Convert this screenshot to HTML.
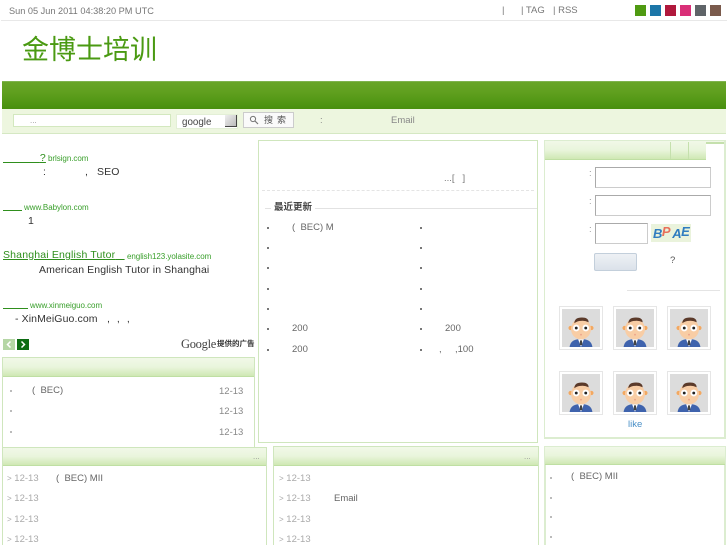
<!DOCTYPE html>
<html><head><meta charset="utf-8">
<style>
html,body{margin:0;padding:0;background:#fff}
#p{position:relative;width:727px;height:545px;overflow:hidden;font-family:"Liberation Sans","Noto Sans CJK SC",sans-serif;font-size:9.5px;color:#666}
#p div,#p span.a,#p svg{position:absolute}
.t{white-space:nowrap;line-height:12px;letter-spacing:0}
.box{border:1px solid #cfe6bd;box-sizing:border-box;background:#fff}
.hd{background:linear-gradient(#f1f8e8,#e9f5dc 50%,#cfe8b4);border-bottom:1px solid #bfdfa3;box-sizing:border-box}
.lnk{color:#2f8f1d;text-decoration:underline;font-size:10.5px;letter-spacing:.17px}
.u{color:#3aa02c;font-size:8px;letter-spacing:-.05px}
.d{color:#333;font-size:10.5px;letter-spacing:.1px}
.dot{width:2px;height:2px;background:#777}
.dl{width:2px;height:2px;background:#bbb}
.g{color:#aaa}
.inp{background:#fff;border:1px solid #aaa;border-right-color:#ccc;border-bottom-color:#ccc;box-sizing:border-box}
.av{width:44px;height:44px;border:1px solid #e6e6e6;box-sizing:border-box;background:#fff}
</style></head><body><div id="p">

<div class="t" style="left:9px;top:5px;color:#777;font-size:9.2px">Sun 05 Jun 2011 04:38:20 PM UTC</div>
<div class="t" style="left:502px;top:5px;color:#777">|</div>
<div class="t" style="left:521px;top:5px;color:#777">| TAG</div>
<div class="t" style="left:553px;top:5px;color:#777">| RSS</div>
<div style="left:635px;top:5px;width:11px;height:11px;background:#4f9a12"></div>
<div style="left:650px;top:5px;width:11px;height:11px;background:#1c76a8"></div>
<div style="left:665px;top:5px;width:11px;height:11px;background:#b0183c"></div>
<div style="left:680px;top:5px;width:11px;height:11px;background:#d92f78"></div>
<div style="left:695px;top:5px;width:11px;height:11px;background:#5f6468"></div>
<div style="left:710px;top:5px;width:11px;height:11px;background:#7a5a4c"></div>
<div style="left:1px;top:20px;width:726px;height:1px;background:#e8e8e8"></div>

<div style="left:22px;top:31px;font-size:27px;line-height:34px;color:#4a9a12;white-space:nowrap;font-family:'Noto Sans CJK SC',sans-serif;font-weight:400">金博士培训</div>

<div style="left:2px;top:81px;width:724px;height:28px;background:linear-gradient(#68a528,#5f9f1e 40%,#47900e);border-top:1px solid #7fb34e;box-sizing:border-box"></div>
<div style="left:2px;top:109px;width:724px;height:25px;background:#edf6df;border-bottom:1px solid #d5e8c3;box-sizing:border-box"></div>
<div style="left:13px;top:114px;width:158px;height:13px;background:#fff;border:1px solid #d3e8bf;box-sizing:border-box"></div>
<div class="t" style="left:30px;top:115px;color:#999;font-size:8px">...</div>
<div style="left:176px;top:114px;width:62px;height:15px;background:#fff;border:1px solid #e3efd6;box-sizing:border-box"></div>
<div class="t" style="left:182px;top:117px;color:#444;font-size:9.800px">google</div>
<div style="left:225px;top:115px;width:12px;height:12px;background:linear-gradient(135deg,#eee,#bbb);border-right:1px solid #444;border-bottom:1px solid #444;box-sizing:border-box"></div>
<div style="left:243px;top:112px;width:51px;height:16px;background:#fafafa;border:1px solid #ccc;box-sizing:border-box"></div>
<svg style="left:249px;top:115px" width="10" height="10" viewBox="0 0 10 10"><circle cx="4" cy="4" r="2.6" fill="none" stroke="#777"/><path d="M6 6l3 3" stroke="#777" stroke-width="1.2"/></svg>
<div class="t" style="left:264px;top:114px;color:#555;font-size:9px;letter-spacing:4px">搜索</div>
<div class="t" style="left:320px;top:115px;color:#888">:</div>
<div class="t" style="left:391px;top:115px;color:#888">Email</div>

<!-- ads -->
<div class="t lnk" style="left:3px;top:152px"><span style="letter-spacing:34px">&nbsp;</span>?</div>
<div class="t u" style="left:48px;top:153px">brlsign.com</div>
<div class="t d" style="left:43px;top:166px">:</div>
<div class="t d" style="left:85px;top:166px">,</div>
<div class="t d" style="left:97px;top:166px">SEO</div>

<div style="left:3px;top:210px;width:19px;height:1px;background:#2f8f1d"></div>
<div class="t u" style="left:24px;top:202px">www.Babylon.com</div>
<div class="t d" style="left:28px;top:215px">1</div>

<div class="t lnk" style="left:3px;top:249px">Shanghai English Tutor<span>&nbsp;&nbsp;&nbsp;</span></div>
<div class="t u" style="left:127px;top:251px">english123.yolasite.com</div>
<div class="t d" style="left:39px;top:264px">American English Tutor in Shanghai</div>

<div style="left:3px;top:308px;width:25px;height:1px;background:#2f8f1d"></div>
<div class="t u" style="left:30px;top:300px">www.xinmeiguo.com</div>
<div class="t d" style="left:15px;top:313px">- XinMeiGuo.com</div>
<div class="t d" style="left:107px;top:313px;letter-spacing:7px">,,,</div>

<div style="left:3px;top:339px;width:12px;height:11px;background:#b5d6a5"></div>
<svg style="left:3px;top:339px" width="12" height="11"><path d="M7.5 2.5L4.5 5.500L7.500 8.500" fill="none" stroke="#fff" stroke-width="1.500"/></svg>
<div style="left:17px;top:339px;width:12px;height:11px;background:#0d6b12"></div>
<svg style="left:17px;top:339px" width="12" height="11"><path d="M4.500 2.500L7.500 5.500L4.500 8.500" fill="none" stroke="#fff" stroke-width="1.500"/></svg>
<div class="t" style="left:181px;top:337px;font-family:'Liberation Serif',serif;font-size:12.5px;color:#444;letter-spacing:-.3px;line-height:14px">Google</div>
<div class="t" style="left:217px;top:338px;font-size:7.5px;color:#333;font-weight:bold;line-height:11px">提供的广告</div>

<!-- left list box -->
<div class="box" style="left:2px;top:357px;width:253px;height:92px"></div>
<div class="hd" style="left:3px;top:358px;width:251px;height:19px"></div>
<div class="dl" style="left:10px;top:390px"></div>
<div class="dl" style="left:10px;top:410px"></div>
<div class="dl" style="left:10px;top:431px"></div>
<div class="t" style="left:32px;top:385px;color:#666">( &nbsp;BEC)</div>
<div class="t" style="left:219px;top:406px;color:#888">12-13</div>
<div class="t" style="left:219px;top:386px;color:#888">12-13</div>
<div class="t" style="left:219px;top:427px;color:#888">12-13</div>

<!-- center panel -->
<div class="box" style="left:258px;top:140px;width:280px;height:303px"></div>
<div class="t" style="left:444px;top:173px;color:#777;font-size:9.5px">...[ &nbsp; ]</div>
<div style="left:262px;top:190px;width:272px;border-top:1px dashed #e4e4e4"></div>
<div style="left:265px;top:208px;width:272px;height:1px;background:#e2e2e2"></div>
<div class="t" style="left:271px;top:202px;background:#fff;padding:0 3px;color:#444;font-size:9.5px;font-weight:bold">最近更新</div>
<div class="dot" style="left:267px;top:227px"></div><div class="dot" style="left:267px;top:247px"></div><div class="dot" style="left:267px;top:267px"></div><div class="dot" style="left:267px;top:288px"></div><div class="dot" style="left:267px;top:308px"></div><div class="dot" style="left:267px;top:328px"></div><div class="dot" style="left:267px;top:349px"></div>
<div class="dot" style="left:420px;top:227px"></div><div class="dot" style="left:420px;top:247px"></div><div class="dot" style="left:420px;top:267px"></div><div class="dot" style="left:420px;top:288px"></div><div class="dot" style="left:420px;top:308px"></div><div class="dot" style="left:420px;top:328px"></div><div class="dot" style="left:420px;top:349px"></div>
<div class="t" style="left:292px;top:222px">( &nbsp;BEC) M</div>
<div class="t" style="left:292px;top:323px">200</div>
<div class="t" style="left:292px;top:344px">200</div>
<div class="t" style="left:445px;top:323px">200</div>
<div class="t" style="left:439px;top:344px">,</div>
<div class="t" style="left:455px;top:344px">,100</div>

<!-- right panel -->
<div class="box" style="left:544px;top:140px;width:182px;height:299px;border:2px solid #dcedd0;border-width:1px 2px 2px 1px"></div>
<div class="hd" style="left:545px;top:141px;width:179px;height:19px"></div>
<div style="left:670px;top:142px;width:1px;height:17px;background:#c5e0ad"></div>
<div style="left:688px;top:142px;width:1px;height:17px;background:#c5e0ad"></div>
<div style="left:706px;top:142px;width:18px;height:18px;background:#fff;border-top:2px solid #c5e0ad;box-sizing:border-box"></div>
<div class="t" style="left:589px;top:168px;color:#999">:</div>
<div class="t" style="left:589px;top:196px;color:#999">:</div>
<div class="t" style="left:589px;top:224px;color:#999">:</div>
<div class="inp" style="left:595px;top:167px;width:116px;height:21px"></div>
<div class="inp" style="left:595px;top:195px;width:116px;height:21px"></div>
<div class="inp" style="left:595px;top:223px;width:53px;height:21px"></div>
<div style="left:651px;top:224px;width:40px;height:18px;background:#eaf3dc"></div>
<div class="t" style="left:653px;top:226px;font-size:13px;font-weight:bold;font-style:italic;color:#2f7cc0;letter-spacing:-.5px;line-height:16px">B<span style="color:#e8705a;position:relative;top:-2px">P</span> A<span style="position:relative;top:-2px">E</span></div>
<div style="left:594px;top:253px;width:43px;height:18px;background:linear-gradient(#eef1f5,#dbe2ea);border:1px solid #c3cfdb;border-radius:2px;box-sizing:border-box"></div>
<div class="t" style="left:670px;top:255px;color:#555">?</div>
<div style="left:627px;top:290px;width:93px;height:1px;background:#e4e4e4"></div>

<svg width="0" height="0" style="left:0;top:0"><defs><symbol id="face" viewBox="0 0 40 40">
<rect width="40" height="40" fill="#dcdcdc"/>
<path d="M8 40q1-7 8-8h8q7 1 8 8z" fill="#3f63ad"/>
<path d="M17 32l3 8 3-8z" fill="#fff"/><path d="M19 33h2l.5 5h-3z" fill="#444"/>
<circle cx="9" cy="20" r="2.200" fill="#f3a860"/><circle cx="31" cy="20" r="2.200" fill="#f3a860"/>
<ellipse cx="20" cy="21" rx="10.500" ry="11" fill="#f8cda5"/>
<path d="M13 15q0-6 8-6 7 0 7 5-4-2-8-1.500-4 0-7 2.500z" fill="#5b3a2a"/>
<circle cx="15" cy="20" r="3.500" fill="#fff"/><circle cx="25" cy="20" r="3.500" fill="#fff"/>
<circle cx="15" cy="20" r="1.500" fill="#222"/><circle cx="25" cy="20" r="1.500" fill="#222"/>
<circle cx="20" cy="27" r="1" fill="#eda58c"/>
</symbol></defs></svg>
<div class="av" style="left:559px;top:306px"></div><svg style="left:562px;top:309px" width="38" height="38"><use href="#face"/></svg>
<div class="av" style="left:613px;top:306px"></div><svg style="left:616px;top:309px" width="38" height="38"><use href="#face"/></svg>
<div class="av" style="left:667px;top:306px"></div><svg style="left:670px;top:309px" width="38" height="38"><use href="#face"/></svg>
<div class="av" style="left:559px;top:371px"></div><svg style="left:562px;top:374px" width="38" height="38"><use href="#face"/></svg>
<div class="av" style="left:613px;top:371px"></div><svg style="left:616px;top:374px" width="38" height="38"><use href="#face"/></svg>
<div class="av" style="left:667px;top:371px"></div><svg style="left:670px;top:374px" width="38" height="38"><use href="#face"/></svg>
<div class="t" style="left:628px;top:419px;color:#4a90c8">like</div>

<!-- bottom left -->
<div class="box" style="left:2px;top:447px;width:265px;height:110px"></div>
<div class="hd" style="left:3px;top:448px;width:263px;height:18px"></div>
<div class="t" style="left:253px;top:451px;color:#999;font-size:8px">...</div>
<div class="t g" style="left:7px;top:473px"><span style="font-size:8px">&gt;</span> 12-13</div>
<div class="t g" style="left:7px;top:493px"><span style="font-size:8px">&gt;</span> 12-13</div>
<div class="t g" style="left:7px;top:514px"><span style="font-size:8px">&gt;</span> 12-13</div>
<div class="t g" style="left:7px;top:534px"><span style="font-size:8px">&gt;</span> 12-13</div>
<div class="t" style="left:56px;top:473px">( &nbsp;BEC) MII</div>

<!-- bottom middle -->
<div class="box" style="left:273px;top:446px;width:266px;height:110px"></div>
<div class="hd" style="left:274px;top:447px;width:264px;height:19px"></div>
<div class="t" style="left:524px;top:451px;color:#999;font-size:8px">...</div>
<div class="t g" style="left:279px;top:473px"><span style="font-size:8px">&gt;</span> 12-13</div>
<div class="t g" style="left:279px;top:493px"><span style="font-size:8px">&gt;</span> 12-13</div>
<div class="t g" style="left:279px;top:514px"><span style="font-size:8px">&gt;</span> 12-13</div>
<div class="t g" style="left:279px;top:534px"><span style="font-size:8px">&gt;</span> 12-13</div>
<div class="t" style="left:334px;top:493px">Email</div>

<!-- bottom right -->
<div class="box" style="left:544px;top:446px;width:182px;height:110px;border:2px solid #dcedd0;border-width:1px 2px"></div>
<div class="hd" style="left:545px;top:447px;width:180px;height:18px"></div>
<div class="dl" style="left:550px;top:477px"></div>
<div class="dl" style="left:550px;top:497px"></div>
<div class="dl" style="left:550px;top:516px"></div>
<div class="dl" style="left:550px;top:536px"></div>
<div class="t" style="left:571px;top:471px">( &nbsp;BEC) MII</div>

</div></body></html>
